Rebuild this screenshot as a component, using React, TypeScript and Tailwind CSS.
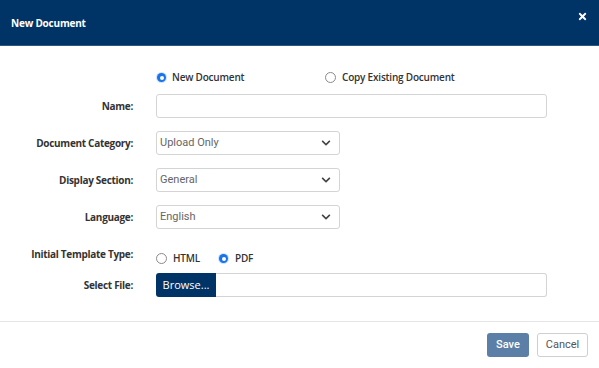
import React from "react";
import { FaTimes, FaChevronDown } from "react-icons/fa";

const Radio = ({ checked }: { checked?: boolean }) =>
  checked ? (
    <span className="flex h-[11px] w-[11px] items-center justify-center rounded-full bg-[#cfe2ff]">
      <span className="flex h-[9px] w-[9px] items-center justify-center rounded-full bg-[#1a73e8]">
        <span className="h-[4px] w-[4px] rounded-full bg-white" />
      </span>
    </span>
  ) : (
    <span className="h-[11px] w-[11px] rounded-full border border-[#8a8a8a] bg-white" />
  );

const Label = ({ children }: { children: React.ReactNode }) => (
  <div className="w-[133px] shrink-0 text-right text-[10px] font-bold tracking-[-0.3px] text-[#333]">
    {children}
  </div>
);

const Select = ({ value }: { value: string }) => (
  <div className="ml-[23px] flex h-[24px] w-[184px] items-center justify-between rounded-[3px] border border-[#d4d4d4] pl-[3px] pr-[8px] font-['Roboto'] text-[11px] text-[#666]">
    <span>{value}</span>
    <FaChevronDown className="text-[10px] text-[#444]" />
  </div>
);

const App = () => {
  return (
    <div className="flex h-[368px] w-[599px] flex-col bg-white font-['Open_Sans',sans-serif]">
      <div className="flex h-[46px] items-center justify-between border-b border-[#2d5580] bg-[#003366] pl-[11px] pr-[11px]">
        <span className="mt-[2px] text-[10px] font-bold tracking-[-0.2px] text-white">New Document</span>
        <FaTimes className="-mt-[12px] text-[11px] text-white" />
      </div>

      <div className="flex flex-col">
        <div className="mt-[24px] flex items-center pl-[156px] text-[10px] font-semibold tracking-[-0.2px] text-[#333]">
          <div className="flex w-[169px] items-center gap-[5px]">
            <Radio checked />
            <span>New Document</span>
          </div>
          <div className="flex items-center gap-[6px]">
            <Radio />
            <span>Copy Existing Document</span>
          </div>
        </div>

        <div className="mt-[9px] flex items-center">
          <Label>Name:</Label>
          <div className="ml-[23px] h-[24px] w-[391px] rounded-[3px] border border-[#d4d4d4]" />
        </div>

        <div className="mt-[13px] flex items-center">
          <Label>Document Category:</Label>
          <Select value="Upload Only" />
        </div>

        <div className="mt-[13px] flex items-center">
          <Label>Display Section:</Label>
          <Select value="General" />
        </div>

        <div className="mt-[13px] flex items-center">
          <Label>Language:</Label>
          <Select value="English" />
        </div>

        <div className="mt-[18px] flex items-start">
          <Label>Initial Template Type:</Label>
          <div className="ml-[23px] mt-[4px] flex items-center text-[10px] font-semibold tracking-[-0.2px] text-[#333]">
            <div className="flex items-center gap-[6px]">
              <Radio />
              <span>HTML</span>
            </div>
            <div className="ml-[18px] flex items-center gap-[6px]">
              <Radio checked />
              <span>PDF</span>
            </div>
          </div>
        </div>

        <div className="mt-[7px] flex items-center">
          <Label>Select File:</Label>
          <div className="ml-[23px] flex h-[24px] w-[391px]">
            <div className="flex w-[60px] items-center justify-center rounded-l-[3px] bg-[#003366] text-[11px] text-white">
              Browse...
            </div>
            <div className="flex-1 rounded-r-[3px] border border-l-0 border-[#d4d4d4]" />
          </div>
        </div>
      </div>

      <div className="mt-[24px] border-t border-[#e5e5e5]" />

      <div className="mt-[11px] flex justify-end gap-[8px] pr-[11px] font-['Roboto'] text-[11px]">
        <div className="flex h-[24px] w-[42px] items-center justify-center rounded-[3px] bg-[#5b7fa6] font-medium text-white">
          Save
        </div>
        <div className="flex h-[24px] w-[51px] items-center justify-center rounded-[3px] border border-[#cfcfcf] text-[#555]">
          Cancel
        </div>
      </div>
    </div>
  );
};

export default App;
